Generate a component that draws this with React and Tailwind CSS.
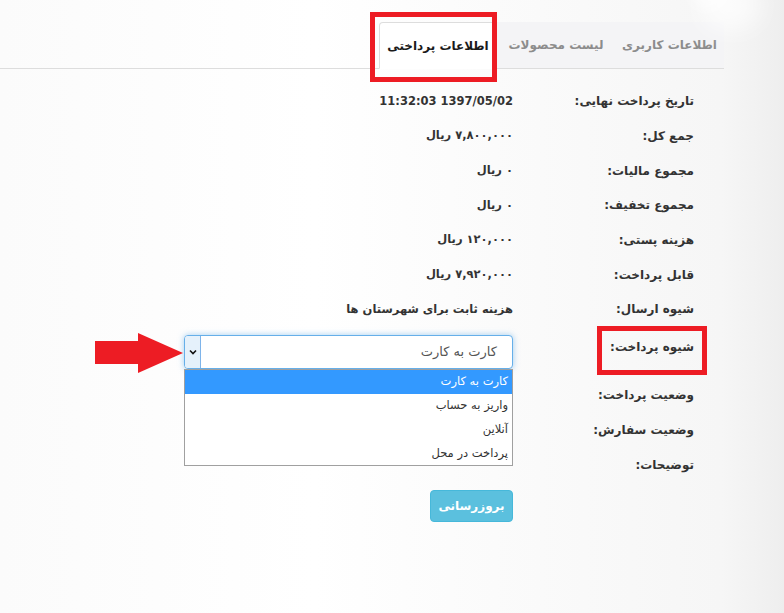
import React from 'react';

const rows = [
  { label: 'تاریخ پرداخت نهایی:', value: '11:32:03 1397/05/02', ltr: true },
  { label: 'جمع کل:', value: '۷,۸۰۰,۰۰۰ ریال' },
  { label: 'مجموع مالیات:', value: '۰ ریال' },
  { label: 'مجموع تخفیف:', value: '۰ ریال' },
  { label: 'هزینه پستی:', value: '۱۲۰,۰۰۰ ریال' },
  { label: 'قابل پرداخت:', value: '۷,۹۲۰,۰۰۰ ریال' },
  { label: 'شیوه ارسال:', value: 'هزینه ثابت برای شهرستان ها' },
];

const options = ['کارت به کارت', 'واریز به حساب', 'آنلاین', 'پرداخت در محل'];

const App = () => {
  return (
    <div className="relative w-[784px] h-[613px] overflow-hidden bg-[linear-gradient(90deg,#fbfbfb_0%,#ffffff_40%,#f6f6f6_92%,#eeeeee_100%)] font-['DejaVu_Sans',sans-serif] text-[#333]">
      {/* soft spots in the background */}
      <div className="absolute left-[700px] top-[-20px] w-[60px] h-[50px] rounded-full bg-white/70 blur-md" />
      <div className="absolute left-[690px] top-[-30px] w-[40px] h-[40px] rounded-full bg-white/60 blur-sm" />

      <div dir="rtl" className="w-[724px]">
        {/* Tabs */}
        <div className="h-[69px] flex items-end border-b border-[#dddddd]">
          <div className="w-[227px] h-[46px] flex bg-[#f4f4f6]">
            <div className="w-[109px] flex items-center justify-center text-[12px] font-bold text-[#8c8c8c]">اطلاعات کاربری</div>
            <div className="w-[118px] flex items-center justify-center text-[12px] font-bold text-[#8c8c8c]">لیست محصولات</div>
          </div>
          <div className="w-[118px] h-[47px] -mb-px flex items-center justify-center bg-white border border-[#dddddd] border-b-white rounded-t-[4px] text-[12px] font-bold text-[#1a1a1a]">
            اطلاعات پرداختی
          </div>
        </div>

        {/* Rows */}
        <div className="pt-[15px] pr-[30px]">
          {rows.map((r) => (
            <div key={r.label} className="h-[34.7px] flex items-center">
              <div className="w-[181px] text-[12px] font-bold text-[#333]">{r.label}</div>
              <div className="text-[11.5px] font-bold text-[#333]">
                {r.ltr ? <span dir="ltr">{r.value}</span> : r.value}
              </div>
            </div>
          ))}

          {/* payment method */}
          <div className="mt-[8px] h-[34px] flex items-start">
            <div className="w-[181px] pt-[3px] text-[12px] font-bold text-[#333]">شیوه پرداخت:</div>
            <div className="relative w-[329px] h-[34px]">
              <div className="h-[34px] flex items-center border border-[#66afe9] rounded-[4px] shadow-[0_0_6px_rgba(102,175,233,0.6)] bg-white">
                <div className="flex-1 pr-[15px] text-[13px] text-[#555]">کارت به کارت</div>
                <div className="w-[16px] h-[32px] flex items-center justify-center bg-[#e5f1fb] border-r border-[#7eb4ea] rounded-l-[3px]">
                  <svg width="8" height="6" viewBox="0 0 8 6">
                    <path d="M1 1.5 L4 4.5 L7 1.5" fill="none" stroke="#111" strokeWidth="1.6" />
                  </svg>
                </div>
              </div>

              {/* open option list */}
              <div className="absolute right-0 top-[34px] w-[329px] h-[97px] border border-[#a0a0a0] bg-white z-10">
                {options.map((o, i) => (
                  <div
                    key={o}
                    className={`h-[24px] flex items-center pr-[4px] text-[11.5px] ${
                      i === 0 ? 'bg-[#3399ff] text-white' : 'text-[#333]'
                    }`}
                  >
                    {o}
                  </div>
                ))}
              </div>

              {/* red arrow annotation */}
              <svg className="absolute left-[-89px] top-[-2px]" width="89" height="41" viewBox="0 0 89 41">
                <polygon points="0,8 43,8 43,0 88,20 43,40 43,31 0,31" fill="#ed1c24" />
              </svg>
            </div>
          </div>

          <div className="mt-[9px]">
            {['وضعیت پرداخت:', 'وضعیت سفارش:', 'توضیحات:'].map((l) => (
              <div key={l} className="h-[35px] flex items-center">
                <div className="w-[181px] text-[12px] font-bold text-[#333]">{l}</div>
              </div>
            ))}
          </div>

          <div className="pr-[181px] mt-[7px]">
            <button className="w-[83px] h-[32px] rounded-[4px] bg-[#5bc0de] border border-[#46b8da] text-white text-[12px] font-bold">
              بروزرسانی
            </button>
          </div>
        </div>
      </div>

      {/* red highlight boxes */}
      <div className="absolute left-[370px] top-[12px] w-[127px] h-[70px] border-[5px] border-[#ed1c24]" />
      <div className="absolute left-[597px] top-[326px] w-[110px] h-[49px] border-[5px] border-[#ed1c24]" />
    </div>
  );
};

export default App;
